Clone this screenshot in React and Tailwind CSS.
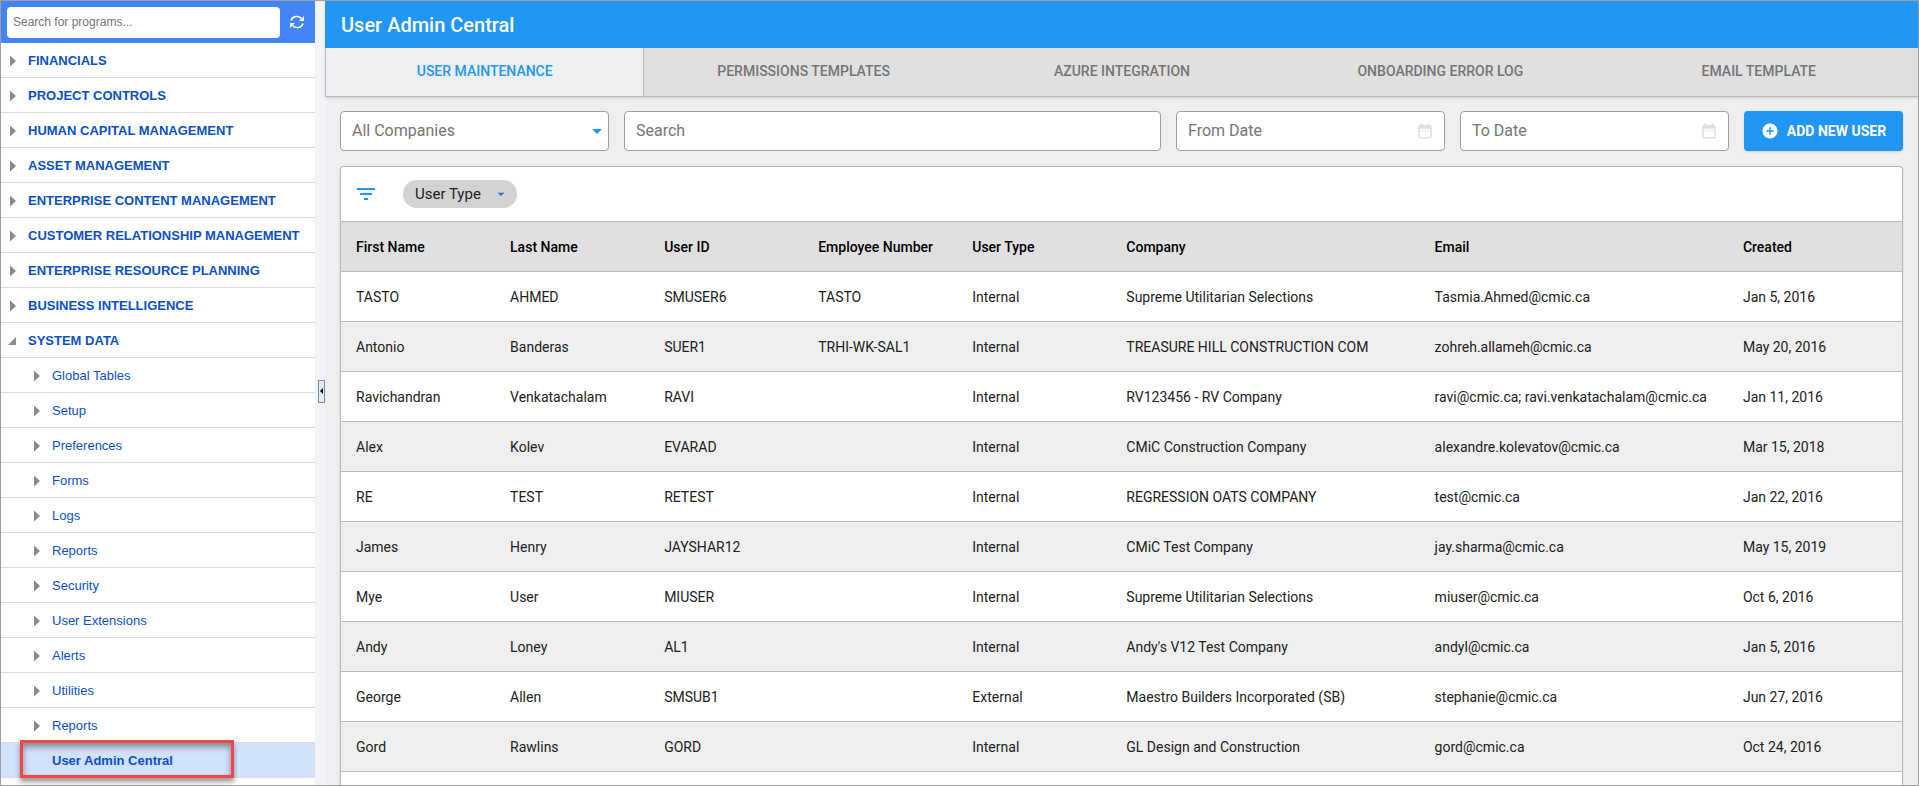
import { useState } from "react";
import {
  MdAddCircle,
  MdArrowDropDown,
  MdDateRange,
  MdFilterList,
} from "react-icons/md";

const modules = [
  "FINANCIALS",
  "PROJECT CONTROLS",
  "HUMAN CAPITAL MANAGEMENT",
  "ASSET MANAGEMENT",
  "ENTERPRISE CONTENT MANAGEMENT",
  "CUSTOMER RELATIONSHIP MANAGEMENT",
  "ENTERPRISE RESOURCE PLANNING",
  "BUSINESS INTELLIGENCE",
];

const systemData = [
  "Global Tables",
  "Setup",
  "Preferences",
  "Forms",
  "Logs",
  "Reports",
  "Security",
  "User Extensions",
  "Alerts",
  "Utilities",
  "Reports",
];

const tabs = [
  "USER MAINTENANCE",
  "PERMISSIONS TEMPLATES",
  "AZURE INTEGRATION",
  "ONBOARDING ERROR LOG",
  "EMAIL TEMPLATE",
];

const columns = [
  { label: "First Name", width: "w-[9.87%]" },
  { label: "Last Name", width: "w-[9.87%]" },
  { label: "User ID", width: "w-[9.87%]" },
  { label: "Employee Number", width: "w-[9.87%]" },
  { label: "User Type", width: "w-[9.87%]" },
  { label: "Company", width: "w-[19.75%]" },
  { label: "Email", width: "w-[19.75%]" },
  { label: "Created", width: "" },
];

const users = [
  ["TASTO", "AHMED", "SMUSER6", "TASTO", "Internal", "Supreme Utilitarian Selections", "Tasmia.Ahmed@cmic.ca", "Jan 5, 2016"],
  ["Antonio", "Banderas", "SUER1", "TRHI-WK-SAL1", "Internal", "TREASURE HILL CONSTRUCTION COM", "zohreh.allameh@cmic.ca", "May 20, 2016"],
  ["Ravichandran", "Venkatachalam", "RAVI", "", "Internal", "RV123456 - RV Company", "ravi@cmic.ca; ravi.venkatachalam@cmic.ca", "Jan 11, 2016"],
  ["Alex", "Kolev", "EVARAD", "", "Internal", "CMiC Construction Company", "alexandre.kolevatov@cmic.ca", "Mar 15, 2018"],
  ["RE", "TEST", "RETEST", "", "Internal", "REGRESSION OATS COMPANY", "test@cmic.ca", "Jan 22, 2016"],
  ["James", "Henry", "JAYSHAR12", "", "Internal", "CMiC Test Company", "jay.sharma@cmic.ca", "May 15, 2019"],
  ["Mye", "User", "MIUSER", "", "Internal", "Supreme Utilitarian Selections", "miuser@cmic.ca", "Oct 6, 2016"],
  ["Andy", "Loney", "AL1", "", "Internal", "Andy's V12 Test Company", "andyl@cmic.ca", "Jan 5, 2016"],
  ["George", "Allen", "SMSUB1", "", "External", "Maestro Builders Incorporated (SB)", "stephanie@cmic.ca", "Jun 27, 2016"],
  ["Gord", "Rawlins", "GORD", "", "Internal", "GL Design and Construction", "gord@cmic.ca", "Oct 24, 2016"],
];

const RefreshIcon = () => (
  <svg width="16" height="16" viewBox="0 0 16 16" fill="none" stroke="currentColor" strokeWidth="1.5">
    <path d="M2 6.500a6 5.500 0 0 1 10.500-2" />
    <path d="M14 9.500a6 5.500 0 0 1-10.500 2" />
    <path d="M15 2v5h-5z" fill="currentColor" stroke="none" />
    <path d="M1 14V9h5z" fill="currentColor" stroke="none" />
  </svg>
);

const Caret = ({ open }) =>
  open ? (
    <svg width="8" height="8" viewBox="0 0 8 8" fill="#868b8f">
      <path d="M8 0v8H0z" />
    </svg>
  ) : (
    <svg width="6" height="12" viewBox="0 0 6 12" fill="#868b8f">
      <path d="M0 0.500L6 6L0 11.500z" />
    </svg>
  );

const TreeItem = ({ label, nested, open }) => (
  <li>
    <a
      href="#"
      className={`flex h-[35px] items-center gap-3 border-b border-[#d4dce5] pt-px text-[#0b50c4] ${
        nested ? "pl-[31px]" : "pl-[7px] font-bold"
      }`}
    >
      <span className="flex w-2 shrink-0 justify-end">
        <Caret open={open} />
      </span>
      {label}
    </a>
  </li>
);

const Sidebar = () => (
  <aside className="w-[314px] shrink-0 overflow-hidden bg-white font-['Liberation_Sans',Arial,sans-serif] text-[13px]">
    <div className="flex h-[42px] items-center bg-[#4285f4] pl-[6px] pr-[10px]">
      <input
        type="text"
        aria-label="Search for programs"
        placeholder="Search for programs..."
        className="h-[31px] min-w-0 flex-1 rounded bg-white px-[6px] text-xs text-gray-700 outline-none placeholder:text-[#757575]"
      />
      <button aria-label="Refresh" className="ml-[9px] text-white">
        <RefreshIcon />
      </button>
    </div>
    <ul>
      {modules.map((label) => (
        <TreeItem key={label} label={label} />
      ))}
      <TreeItem label="SYSTEM DATA" open />
      {systemData.map((label, index) => (
        <TreeItem key={index} label={label} nested />
      ))}
      <li className="relative">
        <a
          href="#"
          className="flex h-[35px] items-center bg-[#d2e2fb] pl-[51px] font-bold text-[#0b50c4]"
        >
          User Admin Central
        </a>
        <span className="pointer-events-none absolute -top-[3px] left-[19px] h-[38px] w-[214px] border-3 border-[#fb4245] shadow-[0_4px_5px_rgba(0,0,0,0.4),inset_0_4px_6px_rgba(0,0,0,0.4)]" />
      </li>
    </ul>
  </aside>
);

const Splitter = () => (
  <div className="flex w-[10px] shrink-0 items-center justify-end bg-[#f1f3f6] pb-1">
    <button
      aria-label="Collapse menu"
      className="flex h-[23px] w-[7px] items-center justify-center border border-[#7590a6] bg-[#e6ebf0]"
    >
      <svg width="3" height="6" viewBox="0 0 3 6" className="shrink-0">
        <path d="M3 0v6L0 3z" />
      </svg>
    </button>
  </div>
);

const field =
  "h-10 w-full rounded-[4px] border border-[#9e9e9e] bg-white px-[11px] pb-px text-base text-[#757575] outline-none placeholder:text-[#757575]";

const DateField = ({ label }) => (
  <div className="relative w-[269px] shrink-0">
    <input type="text" aria-label={label} placeholder={label} className={field} />
    <MdDateRange className="pointer-events-none absolute right-[11px] top-[11px] size-[18px] text-[#e0e0e0]" />
  </div>
);

const Filters = () => (
  <div className="flex gap-[15px]">
    <div className="relative w-[269px] shrink-0">
      <select aria-label="Company" className={`${field} appearance-none`}>
        <option>All Companies</option>
      </select>
      <MdArrowDropDown className="pointer-events-none absolute right-0 top-2 size-6 text-[#2196f3]" />
    </div>
    <input type="text" aria-label="Search" placeholder="Search" className={`${field} min-w-0 flex-1`} />
    <DateField label="From Date" />
    <DateField label="To Date" />
    <button className="flex h-10 w-[159px] shrink-0 items-center justify-center gap-2 rounded-[4px] bg-[#2196f3] text-sm font-bold text-white shadow">
      <MdAddCircle className="size-[18px]" />
      ADD NEW USER
    </button>
  </div>
);

const UserTable = () => (
  <table className="w-full table-fixed border-collapse text-left text-sm">
    <thead>
      <tr className="h-[50px] border-y border-[#b9b9b9] bg-[#e0e0e0]">
        {columns.map(({ label, width }) => (
          <th key={label} className={`whitespace-nowrap pl-[15px] font-medium text-black ${width}`}>
            {label}
          </th>
        ))}
      </tr>
    </thead>
    <tbody>
      {users.map((user, index) => (
        <tr key={index} className="h-[50px] border-b border-[#b9b9b9] even:bg-[#efefef]">
          {user.map((value, i) => (
            <td key={i} className="whitespace-nowrap pl-[15px] text-[#212121]">
              {value}
            </td>
          ))}
        </tr>
      ))}
    </tbody>
  </table>
);

const App = () => {
  const [activeTab, setActiveTab] = useState(tabs[0]);

  return (
    <div className="flex h-screen overflow-hidden border border-[#9e9e9e] bg-[#efefef] font-[Roboto,sans-serif]">
      <Sidebar />
      <Splitter />
      <main className="flex min-w-0 flex-1 flex-col">
        <header className="flex h-[47px] shrink-0 items-center bg-[#2196f3] px-4">
          <h1 className="text-xl font-medium text-white">User Admin Central</h1>
        </header>
        <nav className="z-10 grid h-[49px] shrink-0 grid-cols-5 border-b border-l border-[#b9b9b9] bg-[#e0e0e0] shadow-sm">
          {tabs.map((tab) => (
            <button
              key={tab}
              onClick={() => setActiveTab(tab)}
              className={`pb-[2px] text-sm font-medium ${
                tab === activeTab
                  ? "border-r border-[#b9b9b9] bg-[#efefef] text-[#2196f3]"
                  : "text-[#757575]"
              }`}
            >
              {tab}
            </button>
          ))}
        </nav>
        <div className="flex min-h-0 flex-1 flex-col gap-[15px] px-[15px] pt-[14px]">
          <Filters />
          <section className="min-h-0 flex-1 overflow-hidden rounded-t-[4px] border border-b-0 border-[#b9b9b9] bg-white shadow">
            <div className="flex h-[54px] items-center gap-[25px] pl-[13px]">
              <button aria-label="Filter" className="text-[#2196f3]">
                <MdFilterList className="size-6" />
              </button>
              <div className="relative">
                <select
                  aria-label="User Type"
                  className="h-7 w-[114px] appearance-none rounded-full bg-[#d3d3d3] pl-3 text-[15px] text-[#212121] outline-none"
                >
                  <option>User Type</option>
                </select>
                <MdArrowDropDown className="pointer-events-none absolute right-2 top-[6px] size-4 text-[#1976d2]" />
              </div>
            </div>
            <UserTable />
          </section>
        </div>
      </main>
    </div>
  );
};

export default App;
